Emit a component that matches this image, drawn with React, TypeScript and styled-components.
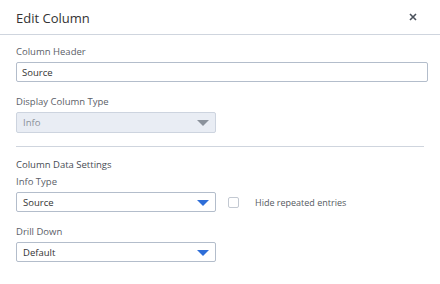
import styled, { createGlobalStyle } from 'styled-components';

const Global = createGlobalStyle`
  body {
    margin: 0;
    background: #fff;
    font-family: "Segoe UI", "Open Sans", "Noto Sans", sans-serif;
  }
`;

const Dialog = styled.div`
  width: 440px;
  height: 284px;
  background: #fff;
`;

const Header = styled.div`
  height: 35px;
  display: flex;
  align-items: center;
  justify-content: space-between;
  padding: 0 22px 0 16px;
  border-bottom: 1px solid #cfd5de;
  box-sizing: border-box;
  h1 {
    margin: 0;
    font-size: 13px;
    font-weight: 400;
    color: #333;
    padding-top: 1px;
  }
`;

const Close = styled.button`
  border: 0;
  background: none;
  padding: 0;
  width: 10px;
  height: 10px;
  display: flex;
  align-items: center;
  justify-content: center;
  cursor: pointer;
`;

const Body = styled.div`
  padding: 10px 12px 0 16px;
`;

const Label = styled.div<{ $strong?: boolean }>`
  font-size: 9.5px;
  line-height: 14px;
  color: ${(p) => (p.$strong ? '#474c54' : '#5b6068')};
  font-weight: ${(p) => (p.$strong ? 500 : 400)};
  margin-bottom: 3px;
`;

const Field = styled.div`
  margin-bottom: 13px;
`;

const TextInput = styled.input`
  display: block;
  box-sizing: border-box;
  width: 100%;
  height: 20px;
  border: 1px solid #b3bdcb;
  border-radius: 2px;
  padding: 0 5px;
  font: inherit;
  font-size: 9.5px;
  color: #333;
  outline: none;
`;

const Select = styled.div<{ $disabled?: boolean }>`
  box-sizing: border-box;
  width: 200px;
  height: ${(p) => (p.$disabled ? 21 : 20)}px;
  border: 1px solid ${(p) => (p.$disabled ? '#cdd4df' : '#b3bdcb')};
  border-radius: 2px;
  background: ${(p) => (p.$disabled ? '#e9edf4' : '#fff')};
  display: flex;
  align-items: center;
  justify-content: space-between;
  padding: 0 6px;
  font-size: 9.5px;
  color: ${(p) => (p.$disabled ? '#8a9099' : '#333')};
`;

const Arrow = styled.span<{ $disabled?: boolean }>`
  width: 0;
  height: 0;
  border-left: 6px solid transparent;
  border-right: 6px solid transparent;
  border-top: 6px solid ${(p) => (p.$disabled ? '#8b929c' : '#2f6ed8')};
  margin-top: 1px;
`;

const Divider = styled.hr`
  border: 0;
  border-top: 1px solid #cfd5de;
  margin: 0 4px 11px 0;
`;

const Row = styled.div`
  display: flex;
  align-items: center;
  gap: 12px;
`;

const Check = styled.label`
  display: flex;
  align-items: center;
  gap: 16px;
  font-size: 9px;
  color: #555a61;
  span {
    box-sizing: border-box;
    width: 11px;
    height: 11px;
    border: 1px solid #c3c9d2;
    border-radius: 2px;
  }
`;

function App() {
  return (
    <Dialog>
      <Global />
      <Header>
        <h1>Edit Column</h1>
        <Close aria-label="close">
          <svg width="8" height="8" viewBox="0 0 8 8">
            <path d="M1 1L7 7M7 1L1 7" stroke="#4b525c" strokeWidth="1.6" />
          </svg>
        </Close>
      </Header>
      <Body>
        <Field>
          <Label>Column Header</Label>
          <TextInput defaultValue="Source" />
        </Field>
        <Field>
          <Label>Display Column Type</Label>
          <Select $disabled>
            Info
            <Arrow $disabled />
          </Select>
        </Field>
        <Divider />
        <Label $strong>Column Data Settings</Label>
        <Field>
          <Label>Info Type</Label>
          <Row>
            <Select>
              Source
              <Arrow />
            </Select>
            <Check>
              <span />
              Hide repeated entries
            </Check>
          </Row>
        </Field>
        <Field>
          <Label>Drill Down</Label>
          <Select>
            Default
            <Arrow />
          </Select>
        </Field>
      </Body>
    </Dialog>
  );
}

export default App;
